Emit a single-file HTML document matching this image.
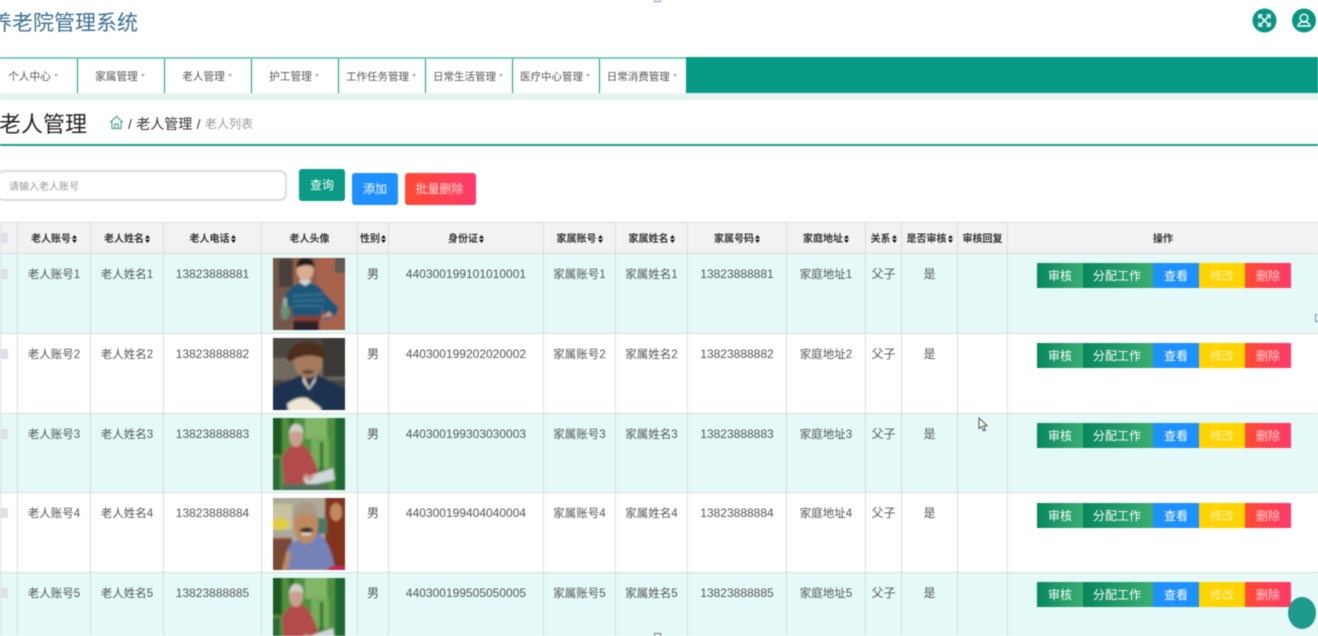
<!DOCTYPE html>
<html lang="zh-CN"><head><meta charset="utf-8"><title>老人管理</title>
<style>
*{box-sizing:border-box}
html,body{margin:0;padding:0;width:1318px;height:636px;overflow:hidden;background:#fff}
body{font-family:"Liberation Sans","Noto Sans CJK SC",sans-serif;color:#555;position:relative}
#w{position:absolute;left:0;top:0;width:1318px;height:636px;overflow:hidden;filter:blur(.5px)}
.a{position:absolute;white-space:nowrap}
.nav{position:absolute;top:57px;left:0;width:1318px;height:36px;background:#069a85}
.ni{position:absolute;top:2px;height:34px;width:86px;background:#fff;font-size:10.7px;line-height:36px;color:#555;text-align:center;padding-right:2px}
.ni i{display:inline-block;width:0;height:0;border:2.5px solid transparent;border-top:3px solid #aaa;margin-left:3px;vertical-align:1px}
.btn{position:absolute;color:#fff;text-align:center;border-radius:3px}
table{position:absolute;left:0;top:222px;border-collapse:collapse;table-layout:fixed;width:1318px}
td,th{border:1px solid #dcdcdc;padding:0;text-align:center;vertical-align:top;overflow:hidden;white-space:nowrap}
th{background:#f2f2f2;height:30px;font-size:10px;font-weight:700;color:#333;line-height:27px;padding-top:3px}
td{font-size:12px;line-height:40px;color:#555;height:80px}
td.z{font-size:11.5px;line-height:42px}
tr.s9 td{height:79px}
tr.o td{background:#e4f9f8}
tr.e td{background:#fff}
.s{display:inline-block;width:5px;height:8px;vertical-align:-1px;margin-left:1px}
.cb{position:absolute;left:0;width:8px;height:10px;background:#dde0e4}
.ops{position:absolute;left:1037px;width:254px;height:25px;display:flex;font-size:12px;line-height:26px;color:#fff;text-align:center}
.ops span{display:block}
.o1{width:46px;background:linear-gradient(90deg,#07875f,#3cae72)}
.o2{width:70px;background:linear-gradient(90deg,#07875f,#3cae72);padding-right:2px}
.o3{width:46px;background:#1e90ff}
.o4{width:46px;background:#ffd400;color:#fff0b0}
.o5{width:46px;background:linear-gradient(90deg,#ff4b33,#ff3a6a);color:#ffd5d5}
.ph{position:absolute;left:273px;width:72px;height:72px}
</style></head><body>
<div id="w">
<svg width="0" height="0" style="position:absolute">
<defs>
<filter id="b" x="-5%" y="-5%" width="110%" height="110%"><feGaussianBlur stdDeviation="1.1"/></filter>
<clipPath id="c"><rect width="72" height="72"/></clipPath>
<symbol id="p1" viewBox="0 0 72 72"><g clip-path="url(#c)"><g filter="url(#b)">
<rect x="-3" y="-3" width="78" height="78" fill="#93604e"/><rect x="-3" y="-3" width="22" height="78" fill="#73584a"/><rect x="44" y="-3" width="31" height="78" fill="#a8644e"/><rect x="62" y="-3" width="13" height="18" fill="#5d5a50"/><rect x="6" y="1" width="14" height="28" fill="#463f3a"/>
<path d="M10 42 Q16 26 32 24 Q46 25 52 36 L66 50 L62 58 L50 62 L50 48 L48 60 L20 60 L18 46 L12 62 L8 56Z" fill="#1a5478"/>
<path d="M19 38 L50 36 M19 43 L52 42 M20 48 L50 48" stroke="#3b7c98" stroke-width="1.4"/>
<path d="M20 62 H46 V75 H20Z" fill="#29222a"/><path d="M22 58 H48 V63 H22Z" fill="#8a3a2a"/>
<path d="M26 24 L32 28 L38 24 L36 21 H28Z" fill="#d0d6dc"/>
<ellipse cx="32" cy="12" rx="8.500" ry="10.500" fill="#dcae90"/><path d="M23 10 Q24 -1 33 0 Q42 0 41 10 Q36 4 23 10Z" fill="#1e1a1a"/>
<ellipse cx="12" cy="54" rx="4.500" ry="8" fill="#6b8f7a"/><rect x="10" y="40" width="4" height="8" fill="#9ab0a0"/>
<path d="M48 60 L60 58 L56 53Z" fill="#c9987a"/>
</g></g></symbol>
<symbol id="p2" viewBox="0 0 72 72"><g clip-path="url(#c)"><g filter="url(#b)">
<rect x="-3" y="-3" width="78" height="78" fill="#4a4640"/><rect x="-3" y="20" width="78" height="22" fill="#6f6a60"/><rect x="50" y="-3" width="25" height="42" fill="#3a3834"/>
<path d="M-3 50 Q18 42 30 36 L42 36 Q58 42 75 52 V75 H-3Z" fill="#1d3250"/>
<path d="M30 36 L36 50 L44 36 L42 44 L36 52 L30 44Z" fill="#d8d4c8"/>
<ellipse cx="35" cy="25" rx="14" ry="15" fill="#a67a5c"/>
<path d="M14 20 Q16 5 34 4 Q52 5 53 17 L52 21 Q34 13 18 23 Q14 24 14 20Z" fill="#4d2f1e"/>
<ellipse cx="35" cy="34" rx="6" ry="2" fill="#5a4030"/>
<path d="M14 66 Q24 58 34 60 L48 70 V75 H16Z" fill="#ece6d4"/>
</g></g></symbol>
<symbol id="p3" viewBox="0 0 72 72"><g clip-path="url(#c)"><g filter="url(#b)">
<rect x="-3" y="-3" width="78" height="78" fill="#4f9040"/><rect x="-3" y="-3" width="12" height="40" fill="#1d5a24"/><rect x="62" y="-3" width="13" height="78" fill="#1f6a30"/><rect x="16" y="-3" width="5" height="24" fill="#2c6f2c"/><rect x="32" y="-3" width="22" height="24" fill="#80b666"/><rect x="38" y="20" width="18" height="30" fill="#74ae5a"/><rect x="-3" y="40" width="10" height="35" fill="#2f6a38"/><rect x="47" y="24" width="3" height="32" fill="#2b6a2e"/>
<path d="M9 42 Q12 30 20 27 L30 27 Q38 32 44 50 L46 60 L36 62 L30 75 H12Z" fill="#b24c4c"/>
<ellipse cx="23" cy="18" rx="7" ry="11" fill="#c9a08e"/><path d="M16 16 Q17 5 24 6 Q31 7 30 16 Q24 10 16 16Z" fill="#cfd0c6"/>
<path d="M30 60 L60 50 L62 62 L34 68Z" fill="#cfd8da"/><path d="M30 56 L42 58 L36 64Z" fill="#c89a86"/>
<rect x="10" y="66" width="46" height="9" fill="#4d6f58"/>
</g></g></symbol>
<symbol id="p4" viewBox="0 0 72 72"><g clip-path="url(#c)"><g filter="url(#b)">
<rect x="-3" y="-3" width="78" height="78" fill="#aea898"/><rect x="52" y="-3" width="23" height="78" fill="#83301e"/><rect x="-3" y="6" width="22" height="26" fill="#c9c2a0"/><ellipse cx="7" cy="26" rx="9" ry="6" fill="#e3cf3a"/><rect x="-3" y="40" width="22" height="35" fill="#7a4a34"/><ellipse cx="63" cy="14" rx="6" ry="9" fill="#c08a60"/><rect x="40" y="20" width="14" height="16" fill="#4a7a66"/>
<path d="M10 72 Q12 50 20 44 L46 36 Q58 44 62 72Z" fill="#7482b8"/>
<ellipse cx="33" cy="26" rx="12" ry="20" fill="#c08a60"/><path d="M21 20 Q22 4 33 4 Q45 5 44 20 Q33 10 21 20Z" fill="#a89a86"/>
<path d="M26 32 Q34 27 41 32 Q34 38 26 32Z" fill="#3a2a24"/><path d="M29 35 H38 V37 H29Z" fill="#eee"/>
<rect x="56" y="68" width="19" height="7" fill="#c02a5a"/><path d="M8 75 L14 52 L18 56 L14 75Z" fill="#c08a60"/>
</g></g></symbol>
<symbol id="so" viewBox="0 0 5 8"><path d="M2.5 0 L5 3.4 H0Z M2.5 8 L5 4.6 H0Z" fill="#111"/></symbol>
</defs></svg>

<div class="a" style="left:-9px;top:10px;font-size:21px;line-height:28px;color:#3b6e92">养老院管理系统</div>
<svg class="a" style="left:1252px;top:8px" width="25" height="25" viewBox="0 0 25 25"><circle cx="12.500" cy="12.500" r="12" fill="#0a9583"/><path d="M8 8 L17 17 M17 8 L8 17 M7 10.500 V7 H10.500 M14.500 7 H18 V10.500 M7 14.500 V18 H10.500 M14.500 18 H18 V14.500" stroke="#fff" stroke-width="1.500" fill="none"/></svg>
<svg class="a" style="left:1292px;top:8px" width="24" height="25" viewBox="0 0 24 25"><circle cx="12" cy="12.500" r="12" fill="#0a9583"/><circle cx="12" cy="10" r="3.800" stroke="#fff" stroke-width="1.400" fill="none"/><path d="M6 18 Q7 14.500 9.500 14 H14.500 Q17 14.500 18 18Z" stroke="#fff" stroke-width="1.400" fill="none"/></svg>
<div class="a" style="left:654px;top:-3px;width:7px;height:5px;border:1px solid #7a9ac0"></div>

<div class="nav">
<div class="ni" style="left:-9px">个人中心<i></i></div>
<div class="ni" style="left:78px">家属管理<i></i></div>
<div class="ni" style="left:165px">老人管理<i></i></div>
<div class="ni" style="left:252px">护工管理<i></i></div>
<div class="ni" style="left:339px;font-size:10.5px">工作任务管理<i></i></div>
<div class="ni" style="left:426px;font-size:10.5px">日常生活管理<i></i></div>
<div class="ni" style="left:513px;font-size:10.5px">医疗中心管理<i></i></div>
<div class="ni" style="left:600px;width:85.5px;font-size:10.5px">日常消费管理<i></i></div>
<div class="a" style="left:0;top:0;width:686px;height:2px;background:#7cc8bb"></div>
</div>
<div class="a" style="left:0;top:93px;width:1318px;height:7px;background:#e7f3f0"></div>

<div class="a" style="left:-1px;top:109px;font-size:22px;line-height:32px;color:#222">老人管理</div>
<svg class="a" style="left:109px;top:115px" width="15" height="15" viewBox="0 0 15 15"><path d="M1 7.500 L7.500 1.500 L14 7.500 M3 6.500 V13.500 H12 V6.500 M5.800 13.500 V9 H9.200 V13.500" stroke="#4fa89a" stroke-width="1.200" fill="none"/></svg>
<div class="a" style="left:128px;top:114px;font-size:14px;line-height:20px;color:#333;word-spacing:.5px">/ 老人管理 /</div>
<div class="a" style="left:205px;top:116px;font-size:12px;line-height:17px;color:#999">老人列表</div>
<div class="a" style="left:0;top:144px;width:1318px;height:2px;background:#1c9c8a"></div>

<div class="a" style="left:-3px;top:170px;width:290px;height:31px;border:2px solid #dcdcdc;border-radius:7px;background:#fff"></div>
<div class="a" style="left:9px;top:181px;font-size:10px;line-height:14px;color:#999">请输入老人账号</div>
<div class="btn" style="left:299px;top:169px;width:46px;height:32px;background:#0a9a85;font-size:12px;line-height:32px">查询</div>
<div class="btn" style="left:352px;top:173px;width:46px;height:32px;background:#1e90ff;font-size:12px;line-height:33px">添加</div>
<div class="btn" style="left:405px;top:173px;width:71px;height:32px;background:linear-gradient(90deg,#ff4b33,#ff3a6a);font-size:12px;line-height:33px;color:#ffdada;padding-right:2px">批量删除</div>

<table>
<colgroup><col style="width:17px"><col style="width:73px"><col style="width:73px"><col style="width:98px"><col style="width:96px"><col style="width:31px"><col style="width:155px"><col style="width:72px"><col style="width:72px"><col style="width:99px"><col style="width:79px"><col style="width:36px"><col style="width:56px"><col style="width:50px"><col style="width:311px"></colgroup>
<tr><th></th><th>老人账号<svg class="s"><use href="#so"/></svg></th><th>老人姓名<svg class="s"><use href="#so"/></svg></th><th>老人电话<svg class="s"><use href="#so"/></svg></th><th>老人头像</th><th>性别<svg class="s"><use href="#so"/></svg></th><th>身份证<svg class="s"><use href="#so"/></svg></th><th>家属账号<svg class="s"><use href="#so"/></svg></th><th>家属姓名<svg class="s"><use href="#so"/></svg></th><th>家属号码<svg class="s"><use href="#so"/></svg></th><th>家庭地址<svg class="s"><use href="#so"/></svg></th><th>关系<svg class="s"><use href="#so"/></svg></th><th>是否审核<svg class="s"><use href="#so"/></svg></th><th>审核回复</th><th>操作</th></tr>
<tr class="o"><td></td><td class="z">老人账号1</td><td class="z">老人姓名1</td><td>13823888881</td><td></td><td>男</td><td>440300199101010001</td><td class="z">家属账号1</td><td class="z">家属姓名1</td><td>13823888881</td><td class="z">家庭地址1</td><td>父子</td><td>是</td><td></td><td></td></tr>
<tr class="e"><td></td><td class="z">老人账号2</td><td class="z">老人姓名2</td><td>13823888882</td><td></td><td>男</td><td>440300199202020002</td><td class="z">家属账号2</td><td class="z">家属姓名2</td><td>13823888882</td><td class="z">家庭地址2</td><td>父子</td><td>是</td><td></td><td></td></tr>
<tr class="o s9"><td></td><td class="z">老人账号3</td><td class="z">老人姓名3</td><td>13823888883</td><td></td><td>男</td><td>440300199303030003</td><td class="z">家属账号3</td><td class="z">家属姓名3</td><td>13823888883</td><td class="z">家庭地址3</td><td>父子</td><td>是</td><td></td><td></td></tr>
<tr class="e"><td></td><td class="z">老人账号4</td><td class="z">老人姓名4</td><td>13823888884</td><td></td><td>男</td><td>440300199404040004</td><td class="z">家属账号4</td><td class="z">家属姓名4</td><td>13823888884</td><td class="z">家庭地址4</td><td>父子</td><td>是</td><td></td><td></td></tr>
<tr class="o"><td></td><td class="z">老人账号5</td><td class="z">老人姓名5</td><td>13823888885</td><td></td><td>男</td><td>440300199505050005</td><td class="z">家属账号5</td><td class="z">家属姓名5</td><td>13823888885</td><td class="z">家庭地址5</td><td>父子</td><td>是</td><td></td><td></td></tr>
</table>

<div class="cb" style="top:233px"></div><div class="cb" style="top:269px"></div><div class="cb" style="top:349px"></div><div class="cb" style="top:429px"></div><div class="cb" style="top:508px"></div><div class="cb" style="top:588px"></div>

<svg class="ph" style="top:258px"><use href="#p1" width="72" height="72"/></svg>
<svg class="ph" style="top:338px"><use href="#p2" width="72" height="72"/></svg>
<svg class="ph" style="top:418px"><use href="#p3" width="72" height="72"/></svg>
<svg class="ph" style="top:498px"><use href="#p4" width="72" height="72"/></svg>
<svg class="ph" style="top:578px"><use href="#p3" width="72" height="72"/></svg>

<div class="ops" style="top:263px"><span class="o1">审核</span><span class="o2">分配工作</span><span class="o3">查看</span><span class="o4">修改</span><span class="o5">删除</span></div>
<div class="ops" style="top:343px"><span class="o1">审核</span><span class="o2">分配工作</span><span class="o3">查看</span><span class="o4">修改</span><span class="o5">删除</span></div>
<div class="ops" style="top:423px"><span class="o1">审核</span><span class="o2">分配工作</span><span class="o3">查看</span><span class="o4">修改</span><span class="o5">删除</span></div>
<div class="ops" style="top:503px"><span class="o1">审核</span><span class="o2">分配工作</span><span class="o3">查看</span><span class="o4">修改</span><span class="o5">删除</span></div>
<div class="ops" style="top:582px"><span class="o1">审核</span><span class="o2">分配工作</span><span class="o3">查看</span><span class="o4">修改</span><span class="o5">删除</span></div>

<div class="a" style="left:1288px;top:597px;width:28px;height:32px;border-radius:50%;background:#1f9a8c"></div>
<div class="a" style="left:1315px;top:314px;width:5px;height:8px;border:1px solid #6f8fa8"></div>
<div class="a" style="left:654px;top:633px;width:7px;height:6px;border:1px solid #777"></div>
<svg class="a" style="left:978px;top:417px" width="11" height="15" viewBox="0 0 11 15"><path d="M1 1 V11.500 L3.500 9.500 L5.500 14 L7.500 13 L5.500 8.800 H9Z" fill="#fff" stroke="#555" stroke-width="1"/></svg>
</div>
</body></html>
